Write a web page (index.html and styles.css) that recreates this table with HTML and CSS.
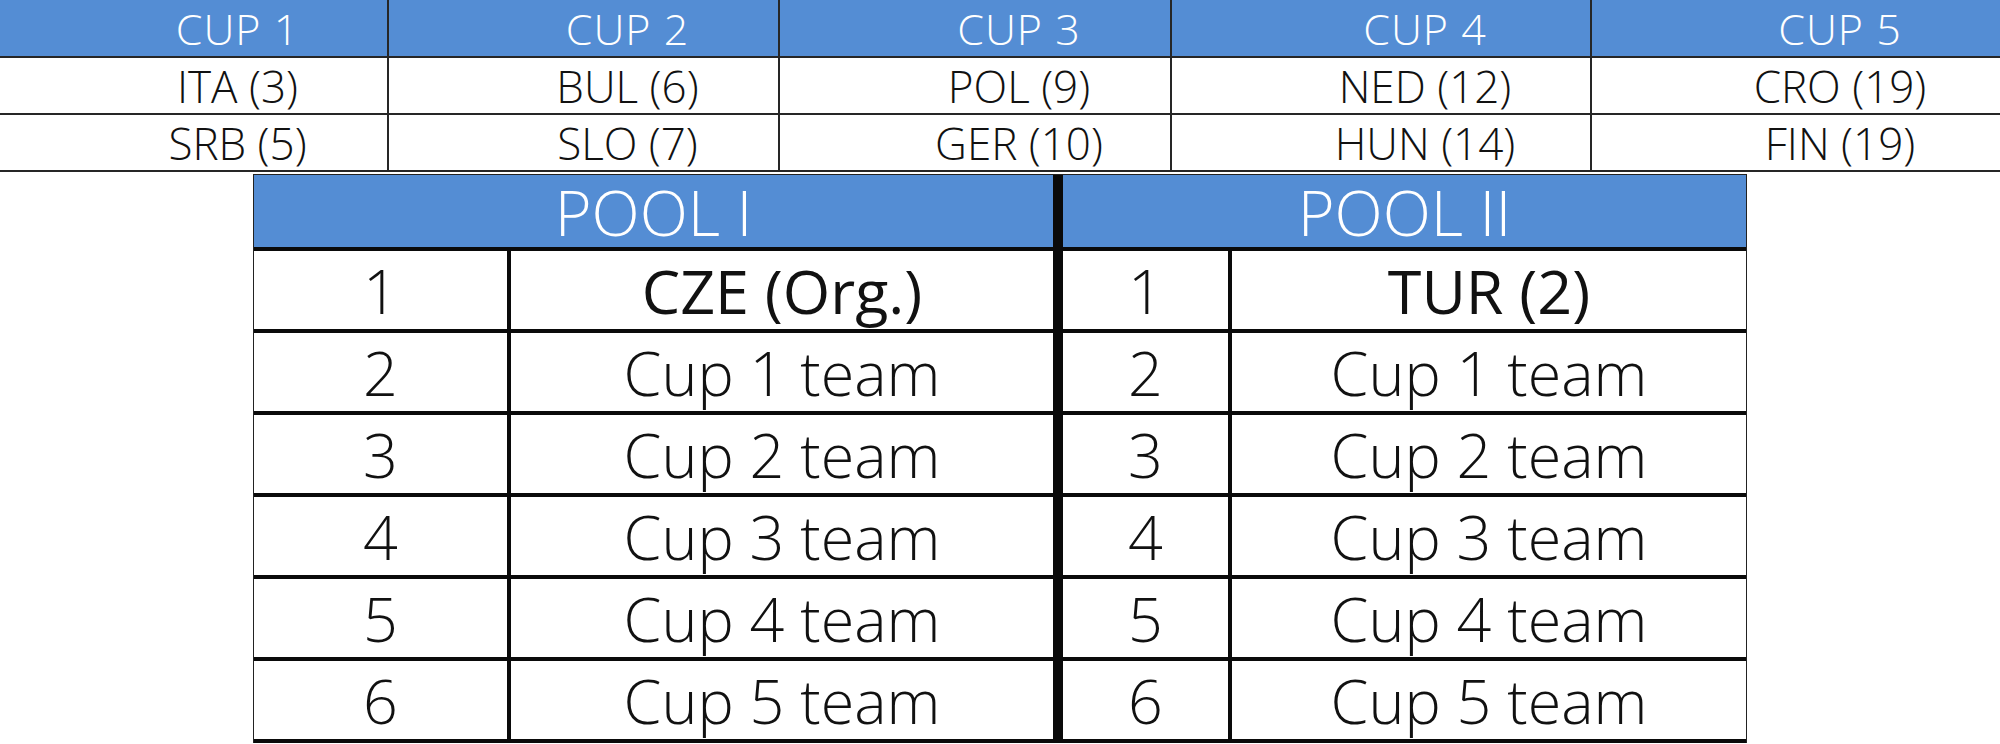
FILE: index.html
```html
<!DOCTYPE html>
<html>
<head>
<meta charset="utf-8">
<link rel="stylesheet" href="styles.css">
</head>
<body>
<div class="cups">
  <div class="cell head">CUP 1</div>
  <div class="cell head">CUP 2</div>
  <div class="cell head">CUP 3</div>
  <div class="cell head">CUP 4</div>
  <div class="cell head">CUP 5</div>
  <div class="cell">ITA (3)</div>
  <div class="cell">BUL (6)</div>
  <div class="cell">POL (9)</div>
  <div class="cell">NED (12)</div>
  <div class="cell">CRO (19)</div>
  <div class="cell">SRB (5)</div>
  <div class="cell">SLO (7)</div>
  <div class="cell">GER (10)</div>
  <div class="cell">HUN (14)</div>
  <div class="cell">FIN (19)</div>
</div>
<div class="pools">
  <div class="pool pool-1">
    <div class="pool-head">POOL I</div>
    <div class="row"><div class="num">1</div><div class="team strong">CZE (Org.)</div></div>
    <div class="row"><div class="num">2</div><div class="team">Cup 1 team</div></div>
    <div class="row"><div class="num">3</div><div class="team">Cup 2 team</div></div>
    <div class="row"><div class="num">4</div><div class="team">Cup 3 team</div></div>
    <div class="row"><div class="num">5</div><div class="team">Cup 4 team</div></div>
    <div class="row"><div class="num">6</div><div class="team">Cup 5 team</div></div>
  </div>
  <div class="pool pool-2">
    <div class="pool-head">POOL II</div>
    <div class="row"><div class="num">1</div><div class="team strong">TUR (2)</div></div>
    <div class="row"><div class="num">2</div><div class="team">Cup 1 team</div></div>
    <div class="row"><div class="num">3</div><div class="team">Cup 2 team</div></div>
    <div class="row"><div class="num">4</div><div class="team">Cup 3 team</div></div>
    <div class="row"><div class="num">5</div><div class="team">Cup 4 team</div></div>
    <div class="row"><div class="num">6</div><div class="team">Cup 5 team</div></div>
  </div>
</div>
</body>
</html>
```

FILE: styles.css
```css
html, body {
  margin: 0;
  padding: 0;
  background: #ffffff;
}

body {
  width: 2000px;
  height: 744px;
  overflow: hidden;
  font-family: "Open Sans", "Liberation Sans", sans-serif;
  color: #111;
}

.cups {
  display: grid;
  grid-template-columns: 387px 389px 390px 418px 1fr;
  grid-template-rows: 56px 55px 55px;
  gap: 2px;
  background: #262626;
  border-bottom: 2px solid #262626;
}

.cell {
  display: flex;
  align-items: center;
  justify-content: center;
  padding-left: 88px;
  background: #fff;
  font-size: 44px;
  font-weight: 300;
  line-height: 1;
}

.cell.head {
  background: #548dd4;
  color: #fff;
  font-size: 43px;
  letter-spacing: 1px;
}

.pools {
  display: flex;
  width: 1492px;
  margin: 2px 0 0 253px;
  border: 1px solid #222;
  border-bottom: 0;
}

.pool {
  display: flex;
  flex-direction: column;
}

.pool-1 {
  width: 799px;
  border-right: 10px solid #0a0a0a;
}

.pool-2 {
  width: 683px;
}

.pool-head {
  height: 72px;
  background: #548dd4;
  color: #fff;
  border-bottom: 4px solid #0a0a0a;
  display: flex;
  align-items: center;
  justify-content: center;
  font-size: 63px;
  font-weight: 300;
  line-height: 1;
}

.row {
  display: flex;
  height: 78px;
  border-bottom: 4px solid #0a0a0a;
}

.num,
.team {
  display: flex;
  align-items: center;
  justify-content: center;
  font-size: 61px;
  font-weight: 300;
  line-height: 1;
}

.pool-1 .num {
  width: 253px;
  border-right: 4px solid #0a0a0a;
}

.pool-2 .num {
  width: 165px;
  border-right: 4px solid #0a0a0a;
}

.team {
  flex: 1;
}

.team.strong {
  font-weight: 500;
}
```
